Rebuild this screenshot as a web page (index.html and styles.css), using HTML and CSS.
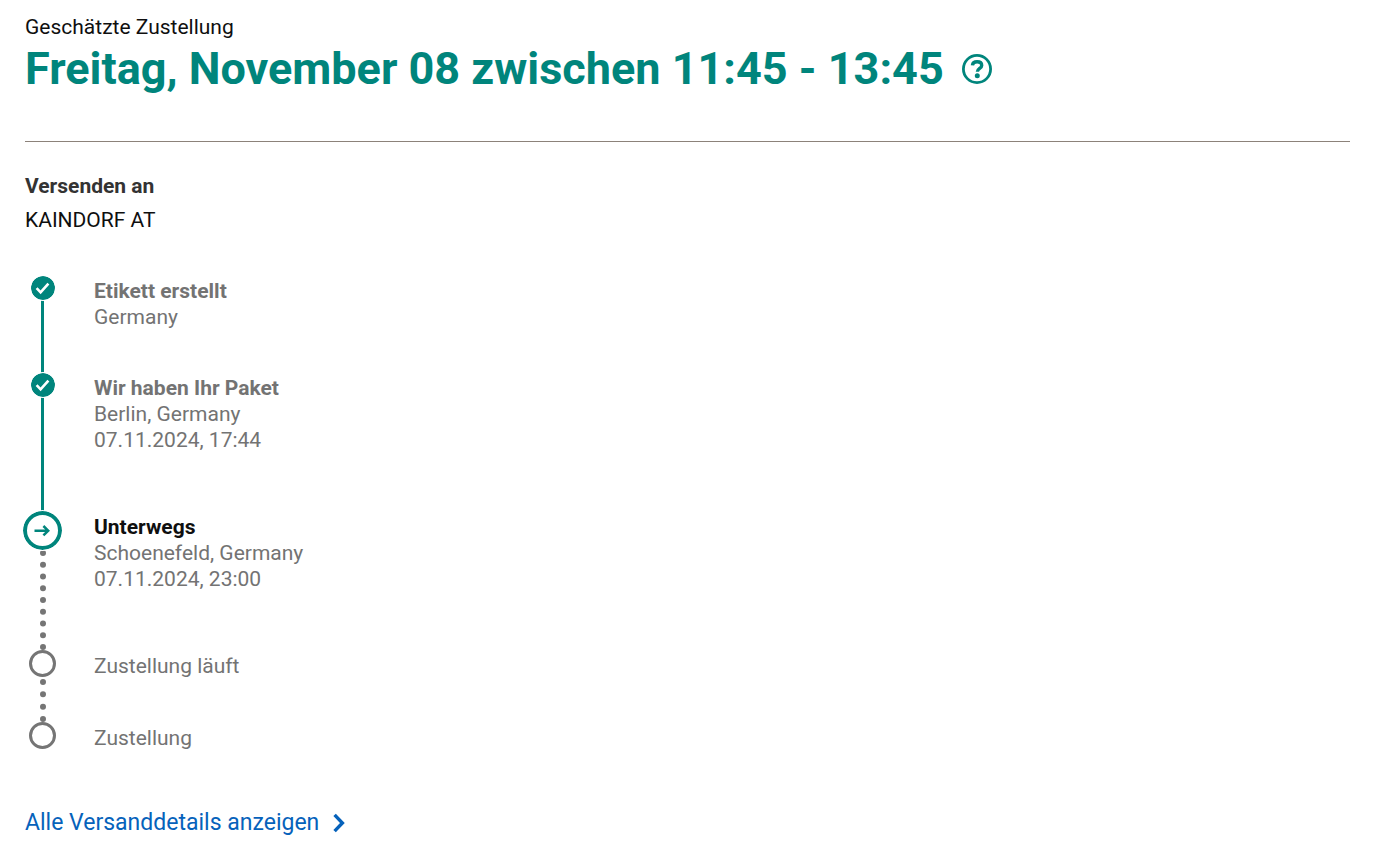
FILE: index.html
```html
<!DOCTYPE html>
<html lang="de">

<head>
    <meta charset="UTF-8">
    <meta name="viewport" content="width=device-width, initial-scale=1.0">
    <title>Sendungsverfolgung</title>
    <link rel="stylesheet" href="styles.css">
</head>

<body>
    <main class="tracking">
        <header class="delivery">
            <p class="delivery-label">Geschätzte Zustellung</p>
            <div class="delivery-row">
                <h1>Freitag, November 08 zwischen 11:45 - 13:45</h1>
                <button class="help" type="button" aria-label="Hilfe">
                    <svg viewBox="0 0 30 30" width="30" height="30" fill="none" stroke="currentColor">
                        <circle cx="15" cy="15" r="13.6" stroke-width="2.8"/>
                        <path d="M10.4 11.4C10.7 9 12.5 7.8 15.1 7.8c2.8 0 4.6 1.4 4.6 3.6 0 3.1-4.3 2.9-4.3 6.4" stroke-width="3.4"/>
                        <circle cx="15.3" cy="21.8" r="2.5" fill="currentColor" stroke="none"/>
                    </svg>
                </button>
            </div>
        </header>

        <section class="ship-to">
            <h2>Versenden an</h2>
            <p>KAINDORF AT</p>
        </section>

        <ol class="steps">
            <li class="step done">
                <div class="track">
                    <svg class="marker" viewBox="0 0 24 24" width="24" height="24">
                        <circle cx="12" cy="12" r="12" fill="currentColor"/>
                        <path d="M5.6 12.2l4 4.2 7.8-8.8" fill="none" stroke="#fff" stroke-width="2.6"/>
                    </svg>
                    <span class="line"></span>
                </div>
                <div class="info">
                    <h3>Etikett erstellt</h3>
                    <p>Germany</p>
                </div>
            </li>
            <li class="step done">
                <div class="track">
                    <svg class="marker" viewBox="0 0 24 24" width="24" height="24">
                        <circle cx="12" cy="12" r="12" fill="currentColor"/>
                        <path d="M5.6 12.2l4 4.2 7.8-8.8" fill="none" stroke="#fff" stroke-width="2.6"/>
                    </svg>
                    <span class="line"></span>
                </div>
                <div class="info">
                    <h3>Wir haben Ihr Paket</h3>
                    <p>Berlin, Germany</p>
                    <p class="date">07.11.2024, 17:44</p>
                </div>
            </li>
            <li class="step current">
                <div class="track">
                    <svg class="marker" viewBox="0 0 39 39" width="39" height="39" fill="none" stroke="currentColor">
                        <circle cx="19.5" cy="19.5" r="17.5" stroke-width="4"/>
                        <path d="M11.5 19.7h13.5M20.4 15l4.8 4.7-4.8 4.7" stroke-width="2.5"/>
                    </svg>
                    <span class="line"></span>
                </div>
                <div class="info">
                    <h3>Unterwegs</h3>
                    <p>Schoenefeld, Germany</p>
                    <p class="date">07.11.2024, 23:00</p>
                </div>
            </li>
            <li class="step open">
                <div class="track">
                    <span class="marker"></span>
                    <span class="line"></span>
                </div>
                <div class="info">
                    <h3>Zustellung läuft</h3>
                </div>
            </li>
            <li class="step open">
                <div class="track">
                    <span class="marker"></span>
                </div>
                <div class="info">
                    <h3>Zustellung</h3>
                </div>
            </li>
        </ol>

        <a class="details" href="#">
            Alle Versanddetails anzeigen
            <svg viewBox="0 0 12 20" width="12" height="20" fill="none" stroke="currentColor" stroke-width="3.4">
                <path d="M1.6 1.8L9.4 10l-7.8 8.2"/>
            </svg>
        </a>
    </main>
</body>

</html>
```
FILE: styles.css
```css
* {
    box-sizing: border-box;
}

body {
    margin: 0;
    background-color: #fff;
    color: #0f0f0f;
    font-family: Roboto, "Liberation Sans", sans-serif;
    font-size: 21px;
    line-height: 26px;
}

h1,
h2,
h3,
p {
    margin: 0;
    font-size: 21px;
}

.tracking {
    padding: 14px 28px 20px 25px;
}

.delivery {
    padding-bottom: 43px;
    border-bottom: 1px solid #8c827a;
}

.delivery-row {
    display: flex;
    align-items: center;
    gap: 18px;
    color: #00857c;
}

.delivery h1 {
    font-size: 45px;
    line-height: 58px;
}

.help {
    display: flex;
    padding: 0;
    border: none;
    background: none;
    color: inherit;
    cursor: pointer;
}

.ship-to {
    display: grid;
    gap: 8px;
    padding: 31px 0 43px;
}

.ship-to h2 {
    color: #333;
}

.steps {
    margin: 0 0 0 -2px;
    padding: 0;
    list-style: none;
}

.step {
    display: flex;
    gap: 32px;
    color: #737373;
}

.track {
    display: flex;
    flex-direction: column;
    align-items: center;
    width: 39px;
}

.marker {
    position: relative;
    flex-shrink: 0;
    border-radius: 50%;
    background-color: #fff;
    color: #00857c;
    box-shadow: 0 0 0 1px #fff;
}

.line {
    flex: 1;
    border-left: 3px solid #00857c;
}

.current .line,
.open .line {
    border-left: 6px dotted #757575;
}

.open .line {
    margin-top: 2px;
}

.open .marker {
    width: 27px;
    height: 27px;
    border: 3px solid #757575;
    box-shadow: none;
}

.info {
    padding: 2px 0 43px;
}

.current .info,
.open .info {
    padding-top: 3px;
}

.date {
    margin-bottom: 15px;
}

.current h3 {
    color: #0f0f0f;
}

.open h3 {
    font-weight: normal;
}

.step:last-child .info {
    padding-bottom: 0;
}

.details {
    display: inline-flex;
    align-items: center;
    gap: 14px;
    margin-top: 58px;
    color: #0662bb;
    font-size: 23px;
    line-height: 28px;
    text-decoration: none;
}
```
